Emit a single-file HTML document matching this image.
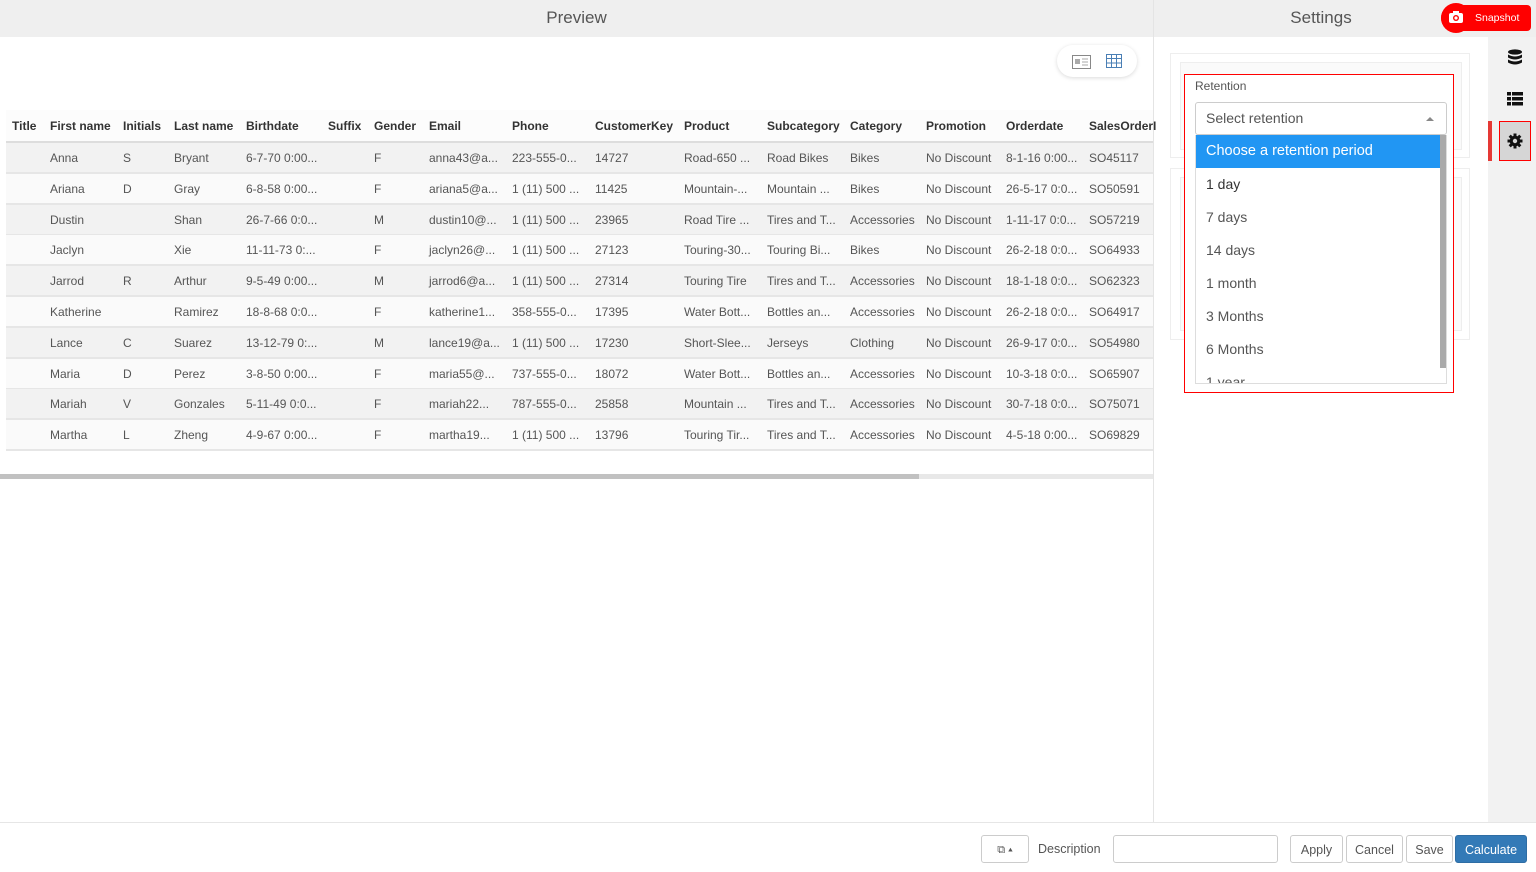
<!DOCTYPE html><html><head><style>
body{margin:0;width:1536px;height:872px;position:relative;font-family:"Liberation Sans",sans-serif;background:#fff;overflow:hidden;color:#555}
.a{position:absolute;white-space:nowrap}
.hd{position:absolute;top:0;height:37px;background:#efefef;font-size:17px;color:#555;text-align:center;line-height:36px}
.c{position:absolute;font-size:12px;white-space:nowrap}
.btn{position:absolute;top:835px;height:28px;border:1px solid #ccc;border-radius:3px;background:#fff;font-size:12.5px;line-height:28px;text-align:center;color:#555;box-sizing:border-box}
.opt{height:33px;line-height:33px;padding-left:10px;font-size:14px;color:#555}
</style></head><body>
<div class="hd" style="left:0;width:1153px">Preview</div>
<div class="hd" style="left:1154px;width:334px">Settings</div>
<div class="a" style="left:1153px;top:0;width:1px;height:822px;background:#e4e4e4"></div>
<div class="a" style="left:1488px;top:37px;width:48px;height:785px;background:#f2f2f2"></div>
<div class="a" style="left:1488px;top:0;width:48px;height:37px;background:#efefef"></div>
<!-- snapshot -->
<div class="a" style="left:1441px;top:5px;width:90px;height:26px;background:#f00;border-radius:13px 4px 4px 13px;color:#fff;font-size:10.5px;line-height:26px;padding-left:34px;box-sizing:border-box">Snapshot</div>
<div class="a" style="left:1441px;top:3px;width:30px;height:30px;border-radius:50%;background:#f00"></div>
<svg class="a" style="left:1448px;top:10px" width="16" height="14"><rect x="1" y="3" width="14" height="10" rx="2" fill="#fff"/><rect x="5" y="1" width="6" height="3" fill="#fff"/><circle cx="8" cy="8" r="3" fill="#f00"/><circle cx="8" cy="8" r="1.6" fill="#fff"/></svg>
<!-- sidebar icons -->
<svg class="a" style="left:1507px;top:49px" width="16" height="18"><ellipse cx="8" cy="3" rx="7" ry="2.6" fill="#111"/><path d="M1 5.5q7 4 14 0v3q-7 4-14 0zM1 10.5q7 4 14 0v3q-7 4-14 0z" fill="#111"/></svg>
<svg class="a" style="left:1507px;top:92px" width="16" height="14"><rect x="0" y="0" width="4" height="3.5" fill="#111"/><rect x="5" y="0" width="11" height="3.5" fill="#111"/><rect x="0" y="5" width="4" height="3.5" fill="#111"/><rect x="5" y="5" width="11" height="3.5" fill="#111"/><rect x="0" y="10" width="4" height="3.5" fill="#111"/><rect x="5" y="10" width="11" height="3.5" fill="#111"/></svg>
<div class="a" style="left:1488px;top:121px;width:4px;height:40px;background:#e53935"></div>
<div class="a" style="left:1499px;top:121px;width:32px;height:40px;background:#d6d6d6;border:1px solid #f00;box-sizing:border-box"></div>
<svg class="a" style="left:1507px;top:133px" width="16" height="16" viewBox="0 0 16 16"><g fill="#111"><circle cx="8" cy="8" r="5.3"/><rect x="6.5" y="0.5" width="3" height="15"/><rect x="6.5" y="0.5" width="3" height="15" transform="rotate(45 8 8)"/><rect x="6.5" y="0.5" width="3" height="15" transform="rotate(90 8 8)"/><rect x="6.5" y="0.5" width="3" height="15" transform="rotate(135 8 8)"/></g><circle cx="8" cy="8" r="2.2" fill="#d6d6d6"/></svg>
<!-- settings panels -->
<div class="a" style="left:1170px;top:53px;width:300px;height:105px;border:1px solid #eee;box-sizing:border-box"></div>
<div class="a" style="left:1180px;top:62px;width:282px;height:88px;border:1px solid #eee;background:#fafafa;box-sizing:border-box"></div>
<div class="a" style="left:1170px;top:168px;width:300px;height:172px;border:1px solid #eee;box-sizing:border-box"></div>
<div class="a" style="left:1180px;top:177px;width:282px;height:154px;border:1px solid #eee;background:#fafafa;box-sizing:border-box"></div>
<div class="a" style="left:1184px;top:74px;width:270px;height:319px;border:1px solid #f00;box-sizing:border-box;background:#fff"></div>
<div class="a" style="left:1195px;top:79px;font-size:12px;color:#555">Retention</div>
<div class="a" style="left:1195px;top:102px;width:252px;height:33px;border:1px solid #ccc;border-radius:3px;box-sizing:border-box;font-size:14px;line-height:31px;padding-left:10px;color:#555">Select retention</div>
<div class="a" style="left:1426px;top:117px;width:0;height:0;border:4px solid transparent;border-bottom:4px solid #888;border-top:0"></div>
<div class="a" style="left:1195px;top:135px;width:252px;height:249px;border:1px solid #ddd;border-top:0;box-sizing:border-box;overflow:hidden;background:#fff">
<div class="opt" style="background:#2196f3;color:#fff;width:245px;box-sizing:border-box;font-size:14.5px">Choose a retention period</div>
<div class="opt" style="color:#333">1 day</div><div class="opt">7 days</div><div class="opt">14 days</div><div class="opt">1 month</div><div class="opt">3 Months</div><div class="opt">6 Months</div><div class="opt">1 year</div>
</div>
<div class="a" style="left:1440px;top:135px;width:6px;height:233px;background:#aaa"></div>
<!-- view toggle -->
<div class="a" style="left:1057px;top:45px;width:80px;height:32px;border-radius:16px;background:#fff;box-shadow:0 1px 4px rgba(0,0,0,.15)"></div>
<svg class="a" style="left:1072px;top:55px" width="19" height="14"><rect x=".5" y=".5" width="18" height="13" fill="none" stroke="#888"/><rect x="3" y="4" width="5" height="5" fill="#aaa"/><path d="M10 4h6M10 7h6M10 10h6" stroke="#aaa"/></svg>
<svg class="a" style="left:1106px;top:54px" width="16" height="14"><rect x=".5" y=".5" width="15" height="13" fill="none" stroke="#4a7fb5"/><path d="M.5 4.5h15M.5 9h15M5.5 .5v13M10.5 .5v13" stroke="#4a7fb5"/></svg>
<!-- table -->
<div class="a" style="left:6px;top:110px;width:1147px;height:32px;background:#fcfcfc"></div>
<div class="a" style="left:6px;top:141px;width:1147px;height:2px;background:#ddd"></div>
<div id="tb"></div>
<div class="a" style="left:0;top:474px;width:919px;height:5px;background:#c1c1c1"></div>
<div class="a" style="left:919px;top:474px;width:234px;height:5px;background:#e8e8e8"></div>
<!-- footer -->
<div class="a" style="left:0;top:822px;width:1536px;height:1px;background:#e6e6e6"></div>
<div class="btn" style="left:981px;width:48px;font-size:11px">⧉ ▴</div>
<div class="a" style="left:1038px;top:842px;font-size:12.5px">Description</div>
<div class="btn" style="left:1113px;width:165px"></div>
<div class="btn" style="left:1290px;width:53px">Apply</div>
<div class="btn" style="left:1346px;width:57px">Cancel</div>
<div class="btn" style="left:1406px;width:47px">Save</div>
<div class="btn" style="left:1455px;width:72px;background:#337ab7;border-color:#2e6da4;color:#fff">Calculate</div>
<script>
var X=[12,50,123,174,246,328,374,429,512,595,684,767,850,926,1006,1089];
var H=["Title","First name","Initials","Last name","Birthdate","Suffix","Gender","Email","Phone","CustomerKey","Product","Subcategory","Category","Promotion","Orderdate","SalesOrderI"];
var R=[["","Anna","S","Bryant","6-7-70 0:00...","","F","anna43@a...","223-555-0...","14727","Road-650 ...","Road Bikes","Bikes","No Discount","8-1-16 0:00...","SO45117"],
["","Ariana","D","Gray","6-8-58 0:00...","","F","ariana5@a...","1 (11) 500 ...","11425","Mountain-...","Mountain ...","Bikes","No Discount","26-5-17 0:0...","SO50591"],
["","Dustin","","Shan","26-7-66 0:0...","","M","dustin10@...","1 (11) 500 ...","23965","Road Tire ...","Tires and T...","Accessories","No Discount","1-11-17 0:0...","SO57219"],
["","Jaclyn","","Xie","11-11-73 0:...","","F","jaclyn26@...","1 (11) 500 ...","27123","Touring-30...","Touring Bi...","Bikes","No Discount","26-2-18 0:0...","SO64933"],
["","Jarrod","R","Arthur","9-5-49 0:00...","","M","jarrod6@a...","1 (11) 500 ...","27314","Touring Tire","Tires and T...","Accessories","No Discount","18-1-18 0:0...","SO62323"],
["","Katherine","","Ramirez","18-8-68 0:0...","","F","katherine1...","358-555-0...","17395","Water Bott...","Bottles an...","Accessories","No Discount","26-2-18 0:0...","SO64917"],
["","Lance","C","Suarez","13-12-79 0:...","","M","lance19@a...","1 (11) 500 ...","17230","Short-Slee...","Jerseys","Clothing","No Discount","26-9-17 0:0...","SO54980"],
["","Maria","D","Perez","3-8-50 0:00...","","F","maria55@...","737-555-0...","18072","Water Bott...","Bottles an...","Accessories","No Discount","10-3-18 0:0...","SO65907"],
["","Mariah","V","Gonzales","5-11-49 0:0...","","F","mariah22...","787-555-0...","25858","Mountain ...","Tires and T...","Accessories","No Discount","30-7-18 0:0...","SO75071"],
["","Martha","L","Zheng","4-9-67 0:00...","","F","martha19...","1 (11) 500 ...","13796","Touring Tir...","Tires and T...","Accessories","No Discount","4-5-18 0:00...","SO69829"]];
var s="";H.forEach(function(h,i){s+='<div class="c" style="left:'+X[i]+'px;top:119px;color:#333;font-weight:bold">'+h+'</div>'});
R.forEach(function(r,j){var y=143+j*30.8;s+='<div class="a" style="left:6px;top:'+y+'px;width:1147px;height:29px;background:'+(j%2?'#fafafa':'#f2f2f2')+';border-bottom:2px solid #e6e6e6"></div>';
r.forEach(function(c,i){s+='<div class="c" style="left:'+X[i]+'px;top:'+(y+8)+'px">'+c+'</div>'})});
document.getElementById("tb").innerHTML=s;
</script>
</body></html>
